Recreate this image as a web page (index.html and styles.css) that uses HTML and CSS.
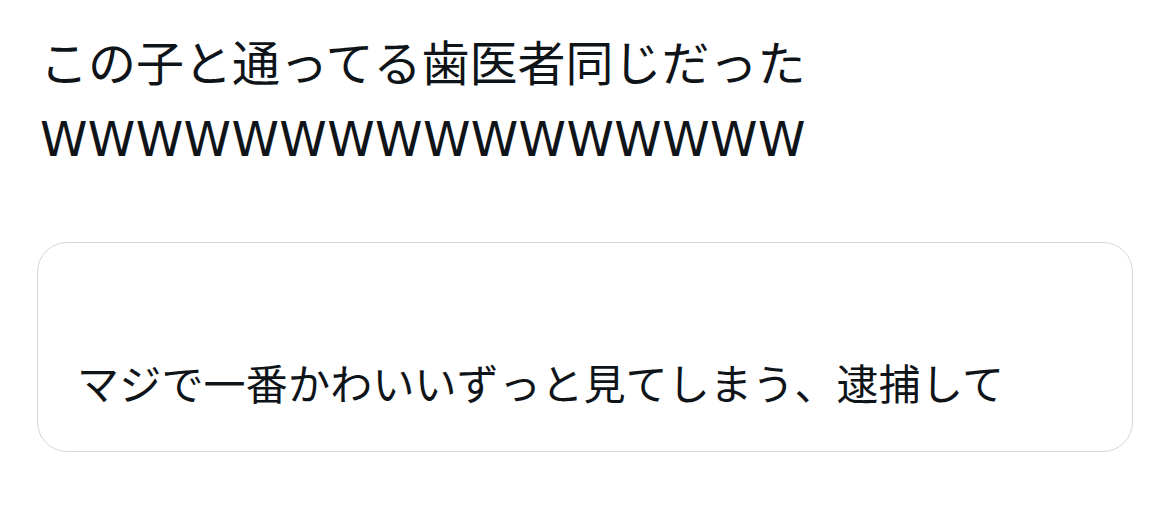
FILE: index.html
```html
<!DOCTYPE html>
<html lang="ja">
<head>
   <meta charset="UTF-8">
   <meta name="viewport" content="width=device-width, initial-scale=1.0">
   <title>Post</title>
   <link rel="stylesheet" href="styles.css">
</head>
<body>
   <div class="post">
      <p class="post-text">この子と通ってる歯医者同じだった<span class="latin">WWWWWWWWWWWWWWWW</span></p>
      <div class="quote">
         <div class="quote-head"></div>
         <p class="quote-text">マジで一番かわいいずっと見てしまう、逮捕して</p>
      </div>
   </div>
</body>
</html>
```

FILE: styles.css
```css
body {
   margin: 0;
   background: #ffffff;
   color: #0f1419;
   font-family: "Noto Sans CJK JP", sans-serif;
}

.post {
   padding: 23px 37px 0 37px;
}

.post-text {
   margin: 0 0 65px 3px;
   font-size: 48px;
   line-height: 75px;
}

.latin {
   font-family: "DejaVu Sans", sans-serif;
   letter-spacing: 0.4px;
}

.quote {
   border: 1px solid #d6d6d6;
   border-radius: 30px;
   padding: 40px 40px 39px 39px;
}

.quote-head {
   height: 69px;
}

.quote-text {
   margin: 0;
   font-size: 42px;
   line-height: 60px;
   letter-spacing: 0.2px;
}
```
